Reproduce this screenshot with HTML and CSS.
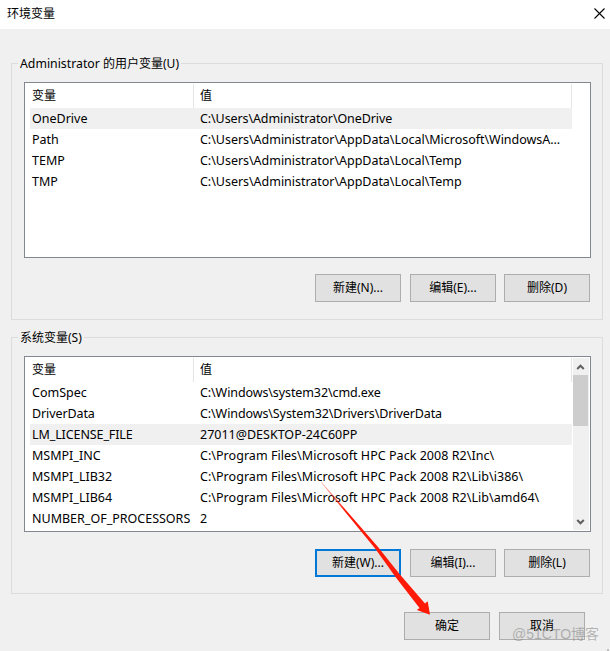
FILE: index.html
```html
<!DOCTYPE html>
<html lang="zh-CN">
<head>
<meta charset="utf-8">
<title>环境变量</title>
<link rel="stylesheet" href="styles.css">
</head>
<body>
<main class="dialog">
  <header class="titlebar">
    <span class="title">环境变量</span>
    <svg class="close" width="11" height="11" viewBox="0 0 11 11"><path d="M.5.5l10 10M10.500.5l-10 10"/></svg>
  </header>

  <section class="group user">
    <h2 class="legend"><span class="name">Administrator</span> 的用户变量(U)</h2>
    <div class="list">
      <div class="table">
        <div class="row head"><span>变量</span><span>值</span></div>
        <div class="row selected"><span>OneDrive</span><span class="tight">C:\Users\Administrator\OneDrive</span></div>
        <div class="row"><span>Path</span><span class="snug">C:\Users\Administrator\AppData\Local\Microsoft\WindowsA...</span></div>
        <div class="row"><span>TEMP</span><span class="snug">C:\Users\Administrator\AppData\Local\Temp</span></div>
        <div class="row"><span>TMP</span><span class="snug">C:\Users\Administrator\AppData\Local\Temp</span></div>
      </div>
    </div>
    <div class="actions">
      <button>新建(N)...</button><button>编辑(E)...</button><button>删除(D)</button>
    </div>
  </section>

  <section class="group system">
    <h2 class="legend">系统变量(S)</h2>
    <div class="list">
      <div class="table">
        <div class="row head"><span>变量</span><span>值</span></div>
        <div class="row"><span>ComSpec</span><span class="tight">C:\Windows\system32\cmd.exe</span></div>
        <div class="row"><span class="tight">DriverData</span><span class="tight">C:\Windows\System32\Drivers\DriverData</span></div>
        <div class="row selected"><span class="tight">LM_LICENSE_FILE</span><span>27011@DESKTOP-24C60PP</span></div>
        <div class="row"><span>MSMPI_INC</span><span class="loose">C:\Program Files\Microsoft HPC Pack 2008 R2\Inc\</span></div>
        <div class="row"><span>MSMPI_LIB32</span><span class="loose">C:\Program Files\Microsoft HPC Pack 2008 R2\Lib\i386\</span></div>
        <div class="row"><span>MSMPI_LIB64</span><span class="loose">C:\Program Files\Microsoft HPC Pack 2008 R2\Lib\amd64\</span></div>
        <div class="row"><span>NUMBER_OF_PROCESSORS</span><span>2</span></div>
      </div>
      <div class="scrollbar">
        <svg width="16" height="17" viewBox="0 0 16 17"><path d="M4.200 11L7.500 7.700L10.800 11"/></svg>
        <div class="thumb"></div>
        <svg class="down" width="16" height="17" viewBox="0 0 16 17"><path d="M4.200 7L7.500 10.300L10.800 7"/></svg>
      </div>
    </div>
    <div class="actions">
      <button class="default">新建(W)...</button><button>编辑(I)...</button><button>删除(L)</button>
    </div>
  </section>

  <footer class="footer">
    <button>确定</button><button>取消</button>
  </footer>

  <svg class="arrow" width="610" height="651" viewBox="0 0 610 651"><defs><linearGradient id="fade" gradientUnits="userSpaceOnUse" x1="321" y1="482" x2="345" y2="512"><stop offset="0" stop-color="#ff1a08" stop-opacity=".25"/><stop offset="1" stop-color="#ff1a08"/></linearGradient></defs><path fill="url(#fade)" d="M320.800 482.300L321.400 481.800L378 547L399.500 574L425 603.500L427.700 601.300L430 614.800L416.800 610L419.500 608L395.500 577L375.500 549Z"/></svg>
  <span class="watermark">@51CTO博客</span>
  <i class="grip"></i>
</main>
</body>
</html>
```
FILE: styles.css
```css
* { box-sizing: border-box; }
body {
  margin: 0;
  font: 12.5px/21px "Noto Sans", "Noto Sans CJK SC", sans-serif;
  color: #000;
}
.dialog {
  position: relative;
  width: 610px;
  height: 651px;
  overflow: hidden;
  background: #f0f0f0;
}
.titlebar {
  display: flex;
  justify-content: space-between;
  height: 29px;
  padding: 3px 5px 0 7px;
  background: #fff;
}
.title { font-size: 12px; }
.close { margin-top: 5px; }
.close path { fill: none; stroke: #000; stroke-width: 1.1; }
.group {
  width: 592px;
  height: 257px;
  margin-left: 11px;
  padding: 0 12px;
  border: 1px solid #dcdcdc;
}
.user { margin-top: 34px; }
.system { margin-top: 17px; }
.legend {
  width: fit-content;
  height: 18px;
  margin: -10px 0 0 -6px;
  padding: 0 2px;
  background: #f0f0f0;
  font-size: 12px;
  font-weight: 400;
  line-height: 19px;
  white-space: nowrap;
}
.name { font-size: 12.3px; }
.list {
  display: flex;
  width: 567px;
  height: 176px;
  margin-top: 10px;
  padding: 1px;
  border: 1px solid #828790;
  background: #fff;
}
.table { width: 546px; padding-left: 4px; }
.row {
  display: grid;
  grid-template-columns: 168px 1fr;
  height: 21px;
  white-space: pre;
}
.row span { padding-left: 2px; }
.head { height: 24px; line-height: 23px; font-size: 12px; }
.head span { border-right: 1px solid #e5e5e5; }
.head span:first-child { margin-right: 4px; }
.selected { background: #f0f0f0; }
.tight { letter-spacing: -.1px; }
.snug { letter-spacing: -.03px; }
.loose { letter-spacing: .04px; }
.scrollbar {
  width: 16px;
  height: 172px;
  margin-left: 1px;
  display: flex;
  flex-direction: column;
  background: #f0f0f0;
}
.scrollbar path { fill: none; stroke: #606060; stroke-width: 2; }
.thumb { width: 15px; height: 51px; background: #cdcdcd; }
.down { margin-top: auto; }
.actions {
  display: grid;
  grid-template-columns: 95px 94px 86px;
  justify-content: end;
  margin: 16px 1px 0 0;
  width: 566px;
}
.system .actions { margin-top: 17px; }
button {
  width: 86px;
  height: 28px;
  padding: 0;
  border: 1px solid #adadad;
  background: #e1e1e1;
  color: #000;
  font: 12px/24px "Noto Sans", "Noto Sans CJK SC", sans-serif;
}
.default { border: 2px solid #0078d7; }
.footer { display: flex; gap: 9px; margin: 18px 0 0 404px; }
.arrow { position: absolute; left: 0; top: 0; }
.watermark {
  position: absolute;
  left: 512px;
  top: 623px;
  font: 14px/22px "Liberation Sans", "Noto Sans CJK SC", sans-serif;
  color: rgba(120, 120, 120, .5);
  white-space: nowrap;
}
.grip { position: absolute; left: 607px; top: 649px; width: 2px; height: 2px; background: #bfbfbf; }
```
